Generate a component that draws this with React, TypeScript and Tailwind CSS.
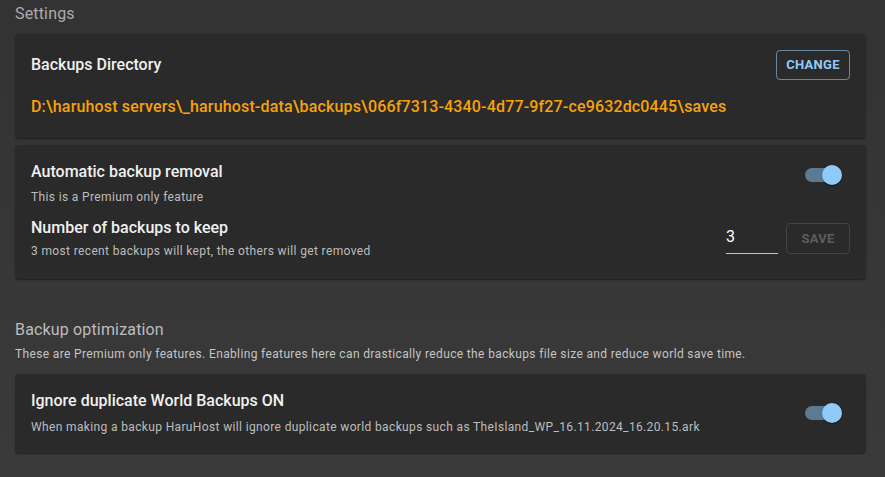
const Toggle = () => (
  <div className="relative w-[58px] h-[38px] shrink-0">
    <div className="absolute left-[12px] top-[12px] w-[34px] h-[14px] rounded-full bg-[#5d7a93]" />
    <div className="absolute left-[29px] top-[9px] w-[20px] h-[20px] rounded-full bg-[#90caf9] shadow-[0_2px_1px_-1px_rgba(0,0,0,0.2),0_1px_1px_0_rgba(0,0,0,0.14),0_1px_3px_0_rgba(0,0,0,0.12)]" />
  </div>
);

const Card = ({ className, children }: { className?: string; children: React.ReactNode }) => (
  <div
    className={`rounded-[4px] bg-[#2a2a2a] shadow-[0_2px_1px_-1px_rgba(0,0,0,0.2),0_1px_1px_0_rgba(0,0,0,0.14),0_1px_3px_0_rgba(0,0,0,0.12)] ${className ?? ''}`}
  >
    {children}
  </div>
);

export default function App() {
  return (
    <div
      className="min-h-[477px] w-full bg-gradient-to-b from-[#333333] to-[#3a3a3a] pl-[15px] pr-[19px] pt-[2px] pb-6 text-white"
      style={{ fontFamily: 'Roboto, "Liberation Sans", sans-serif' }}
    >
      <div className="text-[16px] leading-[24px] tracking-[0.01em] text-[#ababab]">Settings</div>

      <Card className="mt-[8px] pl-[16px] pr-[16px] pt-[16px] pb-[19px]">
        <div className="flex items-center justify-between h-[30px]">
          <div className="text-[16px] leading-[24px] font-medium text-[#f0f0f0]">Backups Directory</div>
          <button className="h-[30px] w-[74px] rounded-[4px] border border-[#90caf9]/60 text-[13px] font-bold tracking-[0.02em] text-[#90caf9]">
            CHANGE
          </button>
        </div>
        <div className="mt-[15px] text-[16px] leading-[24px] font-medium tracking-[0.01em] text-[#f7a20c]">
          D:\haruhost servers\_haruhost-data\backups\066f7313-4340-4d77-9f27-ce9632dc0445\saves
        </div>
      </Card>

      <Card className="mt-[7px] pl-[16px] pr-[15px] pt-[15px] pb-[19px]">
        <div className="flex items-start justify-between">
          <div>
            <div className="text-[16px] leading-[24px] font-medium text-[#f0f0f0]">Automatic backup removal</div>
            <div className="mt-[4px] text-[12px] leading-[18px] tracking-[0.03em] text-[#bdbdbd]">This is a Premium only feature</div>
          </div>
          <div className="-mt-[4px]">
            <Toggle />
          </div>
        </div>
        <div className="mt-[10px] flex items-end justify-between">
          <div>
            <div className="text-[16px] leading-[24px] font-medium text-[#f0f0f0]">Number of backups to keep</div>
            <div className="mt-[2px] text-[12px] leading-[18px] tracking-[0.03em] text-[#bdbdbd]">
              3 most recent backups will kept, the others will get removed
            </div>
          </div>
          <div className="flex items-end gap-[8px] mb-[6px] pr-[1px]">
            <div className="w-[52px] border-b border-[#c4c4c4] pb-[4px] text-[16px] leading-[24px] text-white">3</div>
            <button className="h-[31px] w-[64px] rounded-[4px] border border-[#444444] text-[13px] font-bold tracking-[0.02em] text-[#5e5e5e]">
              SAVE
            </button>
          </div>
        </div>
      </Card>

      <div className="mt-[39px] text-[16px] leading-[24px] tracking-[0.01em] text-[#bdbdbd]">Backup optimization</div>
      <div className="mt-[3px] text-[12px] leading-[18px] tracking-[0.03em] text-[#c4c4c4]">
        These are Premium only features. Enabling features here can drastically reduce the backups file size and reduce world save time.
      </div>

      <Card className="mt-[11px] pl-[16px] pr-[15px] pt-[15px] pb-[17px]">
        <div className="flex items-center justify-between">
          <div>
            <div className="text-[16px] leading-[24px] font-medium text-[#f0f0f0]">Ignore duplicate World Backups ON</div>
            <div className="mt-[5px] text-[12px] leading-[18px] tracking-[0.03em] text-[#bdbdbd]">
              When making a backup HaruHost will ignore duplicate world backups such as TheIsland_WP_16.11.2024_16.20.15.ark
            </div>
          </div>
          <Toggle />
        </div>
      </Card>
    </div>
  );
}
